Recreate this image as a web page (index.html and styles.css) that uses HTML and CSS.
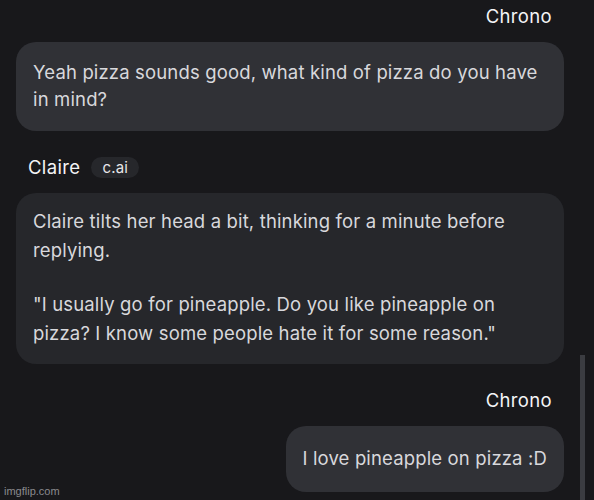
FILE: index.html
```html
<!DOCTYPE html>
<html>
<head>
<meta charset="utf-8">
<link rel="stylesheet" href="styles.css">
</head>
<body>
<div class="chat">
  <div class="msg user">
    <div class="name">Chrono</div>
    <div class="bubble user-bubble wide">Yeah pizza sounds good, what kind of pizza do you have in mind?</div>
  </div>
  <div class="msg bot">
    <div class="name bot-name">Claire <span class="badge">c.ai</span></div>
    <div class="bubble bot-bubble">
      <p>Claire tilts her head a bit, thinking for a minute before replying.</p>
      <p>"I usually go for pineapple. Do you like pineapple on pizza? I know some people hate it for some reason."</p>
    </div>
  </div>
  <div class="msg user last">
    <div class="name">Chrono</div>
    <div class="bubble user-bubble short">I love pineapple on pizza :D</div>
  </div>
</div>
<div class="scrollbar"></div>
<div class="watermark">imgflip.com</div>
</body>
</html>
```
FILE: styles.css
```css
html, body {
  margin: 0;
  padding: 0;
  background: #18181b;
  width: 594px;
  height: 500px;
  overflow: hidden;
}
body {
  font-family: "Inter", "Noto Sans", sans-serif;
  color: #e3e3e6;
  position: relative;
}
.chat {
  padding: 4px 30px 0 16px;
  display: flex;
  flex-direction: column;
}
.msg {
  display: flex;
  flex-direction: column;
}
.user {
  align-items: flex-end;
}
.bot {
  align-items: flex-start;
  margin-top: 24px;
}
.last {
  margin-top: 24px;
}
.name {
  font-size: 18.5px;
  letter-spacing: 0.35px;
  line-height: 24px;
  color: #f4f4f6;
  padding: 0 12px;
  margin-bottom: 14px;
}
.bot-name {
  display: flex;
  align-items: center;
  gap: 11px;
  margin-bottom: 14px;
}
.badge {
  font-size: 15px;
  letter-spacing: 0.2px;
  line-height: 21px;
  background: #26272b;
  border-radius: 11px;
  padding: 0 11px;
  color: #e6e6e9;
}
.bubble {
  font-size: 18.5px;
  letter-spacing: 0.15px;
  line-height: 27px;
  border-radius: 20px;
  color: #d8d8dc;
  box-sizing: border-box;
}
.user-bubble {
  background: #303136;
}
.wide {
  width: 548px;
  padding: 17px 26px 18px 17px;
}
.bot-bubble {
  background: #26272b;
  width: 548px;
  padding: 14px 41px 17px 17px;
  line-height: 28.5px;
}
.bot-bubble p {
  margin: 0;
}
.bot-bubble p + p {
  margin-top: 26px;
}
.short {
  padding: 19px 17px 20px 16px;
}
.scrollbar {
  position: absolute;
  left: 580px;
  top: 355px;
  width: 5px;
  height: 145px;
  background: #3b3c41;
}
.watermark {
  position: absolute;
  left: 4px;
  bottom: 3px;
  font-family: "Liberation Sans", "Noto Sans", sans-serif;
  font-size: 11px;
  color: #8a8a8e;
}
```
